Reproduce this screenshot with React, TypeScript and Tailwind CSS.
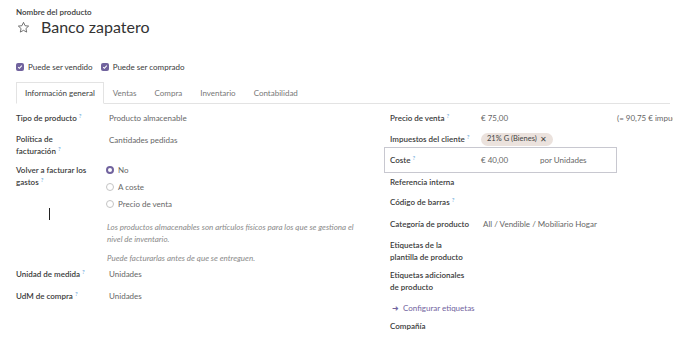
import React from 'react';

const Help = () => <sup className="ml-[2px] text-[6px] font-normal text-[#5aa0d8]">?</sup>;

const Label = ({ children, help }: { children: React.ReactNode; help?: boolean }) => (
  <div className="font-semibold text-[#3a3a3a]">
    {children}
    {help && <Help />}
  </div>
);

const Radio = ({ checked, label }: { checked?: boolean; label: string }) => (
  <div className="flex h-[12px] items-center gap-[4px]">
    <span
      className={`h-[8px] w-[8px] rounded-full ${
        checked ? 'border-[2.5px] border-[#71639e] bg-white' : 'border border-[#c4c4c4] bg-white'
      }`}
    />
    <span>{label}</span>
  </div>
);

export default function App() {
  return (
    <div className="relative h-[344px] w-[690px] overflow-hidden bg-white text-[8px] leading-[12px] text-[#666] font-['Lato','Noto_Sans',sans-serif]">
      <div className="w-[673px] overflow-hidden pl-4">
        {/* Header */}
        <div className="pt-[6px] font-semibold text-[#3a3a3a]">Nombre del producto</div>
        <div className="flex h-[18px] items-center gap-[11px]">
          <svg className="ml-px" width="13" height="13" viewBox="0 0 24 24" fill="none" stroke="#555" strokeWidth="1.5" strokeLinejoin="round">
            <path d="M12 2.5l2.9 6.2 6.6.7-5 4.5 1.4 6.6L12 17.2l-5.9 3.3 1.4-6.6-5-4.5 6.6-.7z" />
          </svg>
          <span className="text-[16px] leading-[18px] text-[#333]">Banco zapatero</span>
        </div>

        {/* Checkboxes */}
        <div className="mt-[25px] flex h-[12px] items-center gap-[8px] text-[#3a3a3a]">
          {['Puede ser vendido', 'Puede ser comprado'].map((t) => (
            <div key={t} className="flex items-center gap-[4px]">
              <span className="flex h-[8px] w-[8px] items-center justify-center rounded-[2px] bg-[#71639e]">
                <svg width="6" height="6" viewBox="0 0 10 10" fill="none" stroke="white" strokeWidth="1.8">
                  <path d="M2 5.2l2 2 4-4.4" />
                </svg>
              </span>
              <span>{t}</span>
            </div>
          ))}
        </div>

        {/* Tabs */}
        <div className="mt-[9px] flex h-[22px] w-[654px] border-b border-[#e3e3e3]">
          <div className="-mb-px flex items-center border border-b-white border-[#e3e3e3] bg-white px-[8px] text-[#3a3a3a]">
            Información general
          </div>
          {['Ventas', 'Compra', 'Inventario', 'Contabilidad'].map((t) => (
            <div key={t} className="flex items-center px-[9px] text-[#777]">
              {t}
            </div>
          ))}
        </div>

        {/* Body */}
        <div className="flex">
          {/* Left column */}
          <div className="w-[368px] shrink-0 pt-[8px]">
            <div className="flex">
              <div className="w-[93px]"><Label help>Tipo de producto</Label></div>
              <div>Producto almacenable</div>
            </div>
            <div className="mt-[9px] flex">
              <div className="w-[93px]"><Label help>Política de<br />facturación</Label></div>
              <div className="pt-px">Cantidades pedidas</div>
            </div>
            <div className="mt-[7px] flex">
              <div className="w-[90px]"><Label help>Volver a facturar los<br />gastos</Label></div>
              <div className="flex flex-col gap-[5px]">
                <Radio checked label="No" />
                <Radio label="A coste" />
                <Radio label="Precio de venta" />
              </div>
            </div>
            <div className="mt-[11px] ml-[91px] w-[254px] italic text-[#8a8a8a]">
              Los productos almacenables son artículos físicos para los que se gestiona el nivel de inventario.
            </div>
            <div className="mt-[7px] ml-[91px] italic text-[#8a8a8a]">Puede facturarlas antes de que se entreguen.</div>
            <div className="mt-[4px] flex">
              <div className="w-[93px]"><Label help>Unidad de medida</Label></div>
              <div>Unidades</div>
            </div>
            <div className="mt-[10px] flex">
              <div className="w-[93px]"><Label help>UdM de compra</Label></div>
              <div>Unidades</div>
            </div>
          </div>

          {/* Right column */}
          <div className="min-w-0 flex-1 overflow-hidden pt-[8px]">
            <div className="flex pl-[6px]">
              <div className="w-[91px] shrink-0"><Label help>Precio de venta</Label></div>
              <div className="w-[136px] shrink-0">€ 75,00</div>
              <div className="whitespace-nowrap">(= 90,75 € impuestos incluidos)</div>
            </div>
            <div className="mt-[9px] flex h-[12px] items-center pl-[6px]">
              <div className="w-[91px]"><Label help>Impuestos del cliente</Label></div>
              <div className="flex h-[13px] items-center gap-[3px] rounded-full bg-[#ebe2dd] px-[6px] text-[7.5px] text-[#444]">
                21% G (Bienes) <span className="text-[8px]">✕</span>
              </div>
            </div>
            <div className="mt-[2px] flex h-[26px] w-[233px] items-center border border-[#c8c8d0] pl-[5px]">
              <div className="w-[91px]"><Label help>Coste</Label></div>
              <div className="w-[59px]">€ 40,00</div>
              <div>por Unidades</div>
            </div>
            <div className="mt-[3px] pl-[6px]"><Label>Referencia interna</Label></div>
            <div className="mt-[8px] pl-[6px]"><Label help>Código de barras</Label></div>
            <div className="mt-[10px] flex pl-[6px]">
              <div className="w-[93px]"><Label>Categoría de producto</Label></div>
              <div>All / Vendible / Mobiliario Hogar</div>
            </div>
            <div className="mt-[9px] pl-[6px]"><Label>Etiquetas de la<br />plantilla de producto</Label></div>
            <div className="mt-[6px] pl-[6px]"><Label>Etiquetas adicionales<br />de producto</Label></div>
            <div className="mt-[9px] flex items-center gap-[4px] pl-[8px] text-[#71639e]">
              <span className="text-[8px]">➜</span>
              <span>Configurar etiquetas</span>
            </div>
            <div className="mt-[6px] pl-[6px]"><Label>Compañía</Label></div>
          </div>
        </div>
      </div>

      {/* mouse text cursor */}
      <div className="absolute left-[49px] top-[208px] h-[12px] w-px bg-[#222]" />
    </div>
  );
}
